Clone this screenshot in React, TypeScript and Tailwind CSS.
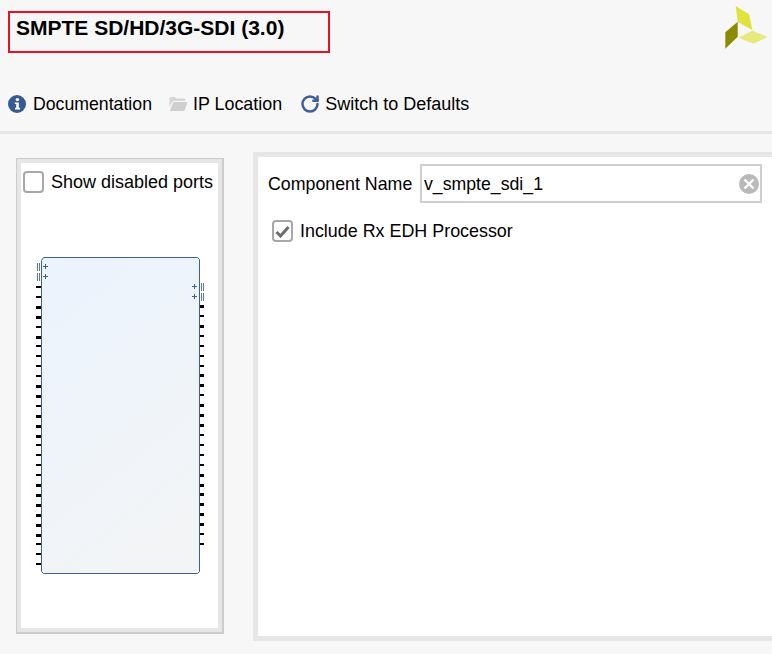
import { RotateCw } from 'lucide-react';

const leftPins = Array.from({ length: 29 }, (_, i) => 287 + Math.round(i * 9.9));
const rightPins = Array.from({ length: 25 }, (_, i) => 306 + Math.round(i * 9.92));
const thick = [2, 3, 5, 10, 11, 13, 14, 15, 20, 21, 22, 23, 24, 25];

// ports on the IP symbol, coordinates relative to the block's svg (origin at page 30,250)
const BlockSymbol = () => (
  <svg width="180" height="330" viewBox="0 0 180 330" shapeRendering="crispEdges" className="block">
    <defs>
      <linearGradient id="blockFill" x1="0.1" y1="0" x2="0.5" y2="1">
        <stop offset="0" stopColor="#ebf3fd" />
        <stop offset="1" stopColor="#f2f4f6" />
      </linearGradient>
    </defs>
    {leftPins.map((y, i) => (
      <rect key={i} x={6} y={y - 250 - 1} width={5} height={thick.includes(i) ? 3 : 2} fill="#000" />
    ))}
    {rightPins.map((y, i) => (
      <rect key={i} x={170} y={y - 250 - 1} width={4} height={thick.includes(i + 3) ? 3 : 2} fill="#000" />
    ))}
    <path
      d="M11.5 10.5 L13.5 7.5 L167.5 7.5 L169.5 9.5 L169.5 321.5 L167.5 323.5 L13.5 323.5 L11.5 321.5 Z"
      fill="url(#blockFill)"
      stroke="#3f5f9a"
      strokeWidth="1"
      shapeRendering="auto"
    />
    {[14, 24].map((y) => (
      <g key={y} fill="#5a78ad">
        <rect x={7} y={y - 1} width={1} height={8} />
        <rect x={9} y={y - 1} width={1} height={8} />
        <rect x={13} y={y + 2} width={5} height={1} fill="#3f5f9a" />
        <rect x={15} y={y} width={1} height={5} fill="#3f5f9a" />
      </g>
    ))}
    {[33, 43].map((y) => (
      <g key={y} fill="#5a78ad">
        <rect x={171} y={y} width={1} height={8} />
        <rect x={173} y={y} width={1} height={8} />
        <rect x={162} y={y + 3} width={5} height={1} fill="#3f5f9a" />
        <rect x={164} y={y + 1} width={1} height={5} fill="#3f5f9a" />
      </g>
    ))}
  </svg>
);

const Logo = () => (
  <svg width="46" height="50" viewBox="724 4 46 50" className="block">
    <polygon points="735.7,6 749,14.3 752.3,30 737.7,21.7" fill="#dfe33a" />
    <polygon points="737.7,21.7 737.7,36.7 725.3,48.7 725.3,32.3" fill="#8b8b00" />
    <polygon points="752.3,30.7 767.7,37 753.3,43.7 738.3,37.7" fill="#e6ea7c" />
  </svg>
);

const InfoIcon = () => (
  <svg width="18" height="18" viewBox="0 0 18 18" className="block">
    <circle cx="9" cy="9" r="9" fill="#365a94" />
    <circle cx="9.4" cy="4.6" r="1.7" fill="#fff" />
    <path d="M6.8 7.4 H10.8 V12.8 H12 V14.4 H7 V12.8 H8.2 V9 H6.8 Z" fill="#fff" />
  </svg>
);

const FolderIcon = () => (
  <svg width="19" height="16" viewBox="0 0 19 16" className="block">
    <path d="M0.5 2 Q0.5 1 1.5 1 H6 L7.5 2.5 H15 Q16 2.5 16 3.5 V5 H4 L0.5 11 Z" fill="#d6d6d6" />
    <path d="M4.5 6 H18.5 L15.5 15 H0.8 Z" fill="#cfcfcf" />
  </svg>
);

const App = () => {
  return (
    <div className="w-[772px] h-[654px] overflow-hidden flex flex-col bg-[#f7f7f7] text-black text-[17.8px] leading-5 font-['Liberation_Sans',Arial,sans-serif]">
      <header className="h-[131px] shrink-0 flex flex-col pl-2">
        <div className="flex justify-between items-start h-[94px]">
          <div className="mt-[11px] w-[322px] h-[42px] border-2 border-[#e81123] pl-1.5 pt-[3px]">
            <h1 className="text-[21px] leading-6 font-bold whitespace-nowrap">SMPTE SD/HD/3G-SDI (3.0)</h1>
          </div>
          <div className="mt-1 mr-0.5">
            <Logo />
          </div>
        </div>
        <div className="flex items-center h-[20px]">
          <div className="flex items-center gap-[7px]">
            <InfoIcon />
            <span className="text-[17.7px]">Documentation</span>
          </div>
          <div className="flex items-center gap-[5px] ml-[17px]">
            <FolderIcon />
            <span className="text-[17.9px]">IP Location</span>
          </div>
          <div className="flex items-center gap-[5px] ml-[18px]">
            <RotateCw size={20} strokeWidth={3} color="#3f5f9a" />
            <span className="text-[18px]">Switch to Defaults</span>
          </div>
        </div>
      </header>

      <div className="h-[3px] shrink-0 bg-[#e6e6e6]" />

      <div className="flex items-start pl-4 pt-[18px]">
        <aside className="mt-1.5 w-[208px] h-[476px] border border-[#cccccc] border-b-2 border-r-2 bg-white">
          <div className="h-full border-4 border-[#e6e6e6] flex flex-col">
            <label className="flex items-center gap-[7px] pl-0.5 pt-2 h-[30px]">
              <span className="w-[21px] h-[22px] rounded border-2 border-[#a8a8a8] bg-white" />
              <span className="text-[18px] whitespace-nowrap">Show disabled ports</span>
            </label>
            <div className="mt-[57px] ml-[9px]">
              <BlockSymbol />
            </div>
          </div>
        </aside>

        <main className="ml-[29px] w-[519px] h-[489px] border-[5px] border-r-0 border-[#e6e6e6] bg-white pl-[10px]">
          <div className="flex items-center pt-[7px]">
            <span className="w-[144px] whitespace-nowrap">Component Name</span>
            <div className="ml-2 w-[342px] h-[39px] border-2 border-[#cfcfcf] bg-white flex items-center justify-between pl-[2px] pr-[1px]">
              <span className="text-[17.7px]">v_smpte_sdi_1</span>
              <svg width="20" height="20" viewBox="0 0 20 20" className="block">
                <circle cx="10" cy="10" r="10" fill="#b9b9b9" />
                <path d="M5.5 5.5 L14.5 14.5 M14.5 5.5 L5.5 14.5" stroke="#fff" strokeWidth="2.4" />
              </svg>
            </div>
          </div>
          <label className="flex items-center gap-[7px] mt-[17px] ml-1">
            <span className="w-[21px] h-[22px] rounded border-2 border-[#a8a8a8] bg-white flex items-center justify-center">
              <svg width="15" height="13" viewBox="0 0 15 13" className="block">
                <path d="M1.5 7 L5.5 11 L13.5 2" fill="none" stroke="#6e6e6e" strokeWidth="3" />
              </svg>
            </span>
            <span className="text-[17.9px] whitespace-nowrap">Include Rx EDH Processor</span>
          </label>
        </main>
      </div>
    </div>
  );
};

export default App;
